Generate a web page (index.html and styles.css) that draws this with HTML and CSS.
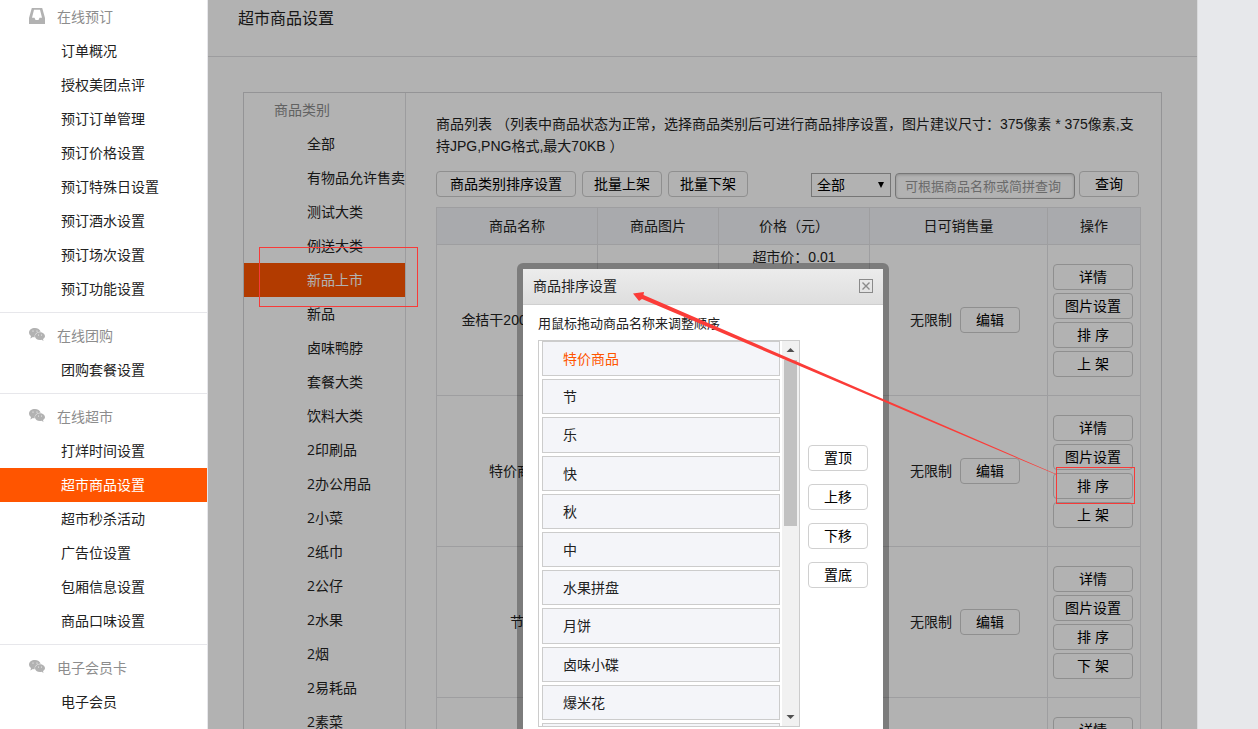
FILE: index.html
```html
<!DOCTYPE html>
<html lang="zh-CN">
<head>
<meta charset="utf-8">
<title>超市商品设置</title>
<link rel="stylesheet" href="styles.css">
</head>
<body>
<svg class="defs" aria-hidden="true">
  <symbol id="wechat" viewBox="0 0 16 16">
    <path fill="#b2b2b2" fill-rule="evenodd" d="M6 1C2.500 1 0 3 0 5.600c0 1.500.8 2.700 2 3.500L1.400 11.500l2.500-1.400c.6.2 1.200.2 1.800.2C5.300 7 8 4.600 11.700 4.700 11 2.500 8.700 1 6 1zM4 3.400a.6.6 0 1 1 0 1.200.6.6 0 0 1 0-1.200zm4 0a.6.6 0 1 1 0 1.200.6.6 0 0 1 0-1.200z"/>
    <path fill="#b2b2b2" fill-rule="evenodd" d="M11 5.200c-2.800 0-5 1.800-5 4S8.200 13 11 13c.6 0 1.100-.1 1.600-.2l1.900 1.100-.5-1.800c1.200-.7 2-1.800 2-2.900 0-2.200-2.200-4-5-4zM9.400 7.500a.5.500 0 1 1 0 1 .5.500 0 0 1 0-1zm3.200 0a.5.500 0 1 1 0 1 .5.500 0 0 1 0-1z"/>
  </symbol>
</svg>
<div class="page">
  <nav class="sidebar">
    <section class="group">
      <h2 class="group-title"><svg class="icon" viewBox="0 0 16 16"><path fill="#b2b2b2" fill-rule="evenodd" d="M2.800 0h10.400L16 10v6H0v-6zM5 1.800 3 9.800h2.500l1 2.200h3l1-2.200H13L11 1.800z"/></svg>在线预订</h2>
      <a class="item" href="#">订单概况</a>
      <a class="item" href="#">授权美团点评</a>
      <a class="item" href="#">预订订单管理</a>
      <a class="item" href="#">预订价格设置</a>
      <a class="item" href="#">预订特殊日设置</a>
      <a class="item" href="#">预订酒水设置</a>
      <a class="item" href="#">预订场次设置</a>
      <a class="item" href="#">预订功能设置</a>
    </section>
    <section class="group">
      <h2 class="group-title"><svg class="icon"><use href="#wechat"/></svg>在线团购</h2>
      <a class="item" href="#">团购套餐设置</a>
    </section>
    <section class="group">
      <h2 class="group-title"><svg class="icon"><use href="#wechat"/></svg>在线超市</h2>
      <a class="item" href="#">打烊时间设置</a>
      <a class="item active" href="#">超市商品设置</a>
      <a class="item" href="#">超市秒杀活动</a>
      <a class="item" href="#">广告位设置</a>
      <a class="item" href="#">包厢信息设置</a>
      <a class="item" href="#">商品口味设置</a>
    </section>
    <section class="group">
      <h2 class="group-title"><svg class="icon"><use href="#wechat"/></svg>电子会员卡</h2>
      <a class="item" href="#">电子会员</a>
    </section>
  </nav>

  <main class="main">
    <h1 class="title">超市商品设置</h1>
    <div class="panel">
      <div class="categories">
        <h2 class="cat-title">商品类别</h2>
        <a class="cat" href="#">全部</a>
        <a class="cat" href="#">有物品允许售卖</a>
        <a class="cat" href="#">测试大类</a>
        <a class="cat" href="#">例送大类</a>
        <a class="cat active" href="#">新品上市</a>
        <a class="cat" href="#">新品</a>
        <a class="cat" href="#">卤味鸭脖</a>
        <a class="cat" href="#">套餐大类</a>
        <a class="cat" href="#">饮料大类</a>
        <a class="cat" href="#">2印刷品</a>
        <a class="cat" href="#">2办公用品</a>
        <a class="cat" href="#">2小菜</a>
        <a class="cat" href="#">2纸巾</a>
        <a class="cat" href="#">2公仔</a>
        <a class="cat" href="#">2水果</a>
        <a class="cat" href="#">2烟</a>
        <a class="cat" href="#">2易耗品</a>
        <a class="cat" href="#">2素菜</a>
      </div>
      <div class="content">
        <p class="hint">商品列表 （列表中商品状态为正常，选择商品类别后可进行商品排序设置，图片建议尺寸：375像素 * 375像素,支持JPG,PNG格式,最大70KB ）</p>
        <div class="toolbar">
          <div class="bulk">
            <button class="btn wide">商品类别排序设置</button>
            <button class="btn mid">批量上架</button>
            <button class="btn mid">批量下架</button>
          </div>
          <form class="search">
            <span class="select-wrap"><select class="select" aria-label="商品状态"><option>全部</option></select></span>
            <input class="query" type="text" aria-label="查询" placeholder="可根据商品名称或简拼查询">
            <button class="btn" type="button">查询</button>
          </form>
        </div>
        <table class="goods">
          <colgroup><col class="c-name"><col class="c-pic"><col class="c-price"><col class="c-stock"><col class="c-op"></colgroup>
          <thead>
            <tr><th>商品名称</th><th>商品图片</th><th>价格（元）</th><th>日可销售量</th><th>操作</th></tr>
          </thead>
          <tbody>
            <tr>
              <td>金桔干200克/袋装</td><td></td><td class="price">超市价：0.01</td>
              <td><div class="stock">无限制<button class="btn">编辑</button></div></td>
              <td><div class="ops"><button class="btn mid">详情</button><button class="btn mid">图片设置</button><button class="btn mid">排 序</button><button class="btn mid">上 架</button></div></td>
            </tr>
            <tr>
              <td>特价商品</td><td></td><td></td>
              <td><div class="stock">无限制<button class="btn">编辑</button></div></td>
              <td><div class="ops"><button class="btn mid">详情</button><button class="btn mid">图片设置</button><button class="btn mid">排 序</button><button class="btn mid">上 架</button></div></td>
            </tr>
            <tr>
              <td>节</td><td></td><td></td>
              <td><div class="stock">无限制<button class="btn">编辑</button></div></td>
              <td><div class="ops"><button class="btn mid">详情</button><button class="btn mid">图片设置</button><button class="btn mid">排 序</button><button class="btn mid">下 架</button></div></td>
            </tr>
            <tr>
              <td></td><td></td><td></td><td></td>
              <td><div class="ops"><button class="btn mid">详情</button></div></td>
            </tr>
          </tbody>
        </table>
      </div>
    </div>
    <div class="mask"></div>
  </main>

  <div class="dialog" role="dialog" aria-labelledby="dialog-title">
    <header class="dialog-head">
      <h2 class="dialog-title" id="dialog-title">商品排序设置</h2>
      <button class="close" aria-label="关闭"><svg class="close-icon" viewBox="0 0 14 14"><rect x=".5" y=".5" width="13" height="13" fill="none" stroke="#8a8a8a"/><path d="M3.500 3.500l7 7M10.500 3.500l-7 7" fill="none" stroke="#8a8a8a" stroke-width="1.400"/></svg></button>
    </header>
    <div class="dialog-body">
      <p class="tip">用鼠标拖动商品名称来调整顺序</p>
      <div class="sorter">
        <div class="list-box">
          <ul class="list">
            <li class="row selected">特价商品</li>
            <li class="row">节</li>
            <li class="row">乐</li>
            <li class="row">快</li>
            <li class="row">秋</li>
            <li class="row">中</li>
            <li class="row">水果拼盘</li>
            <li class="row">月饼</li>
            <li class="row">卤味小碟</li>
            <li class="row">爆米花</li>
            <li class="row"></li>
          </ul>
          <div class="scrollbar">
            <svg class="arrow" viewBox="0 0 17 17"><path fill="#505050" d="M4.500 11h8l-4-4z"/></svg>
            <div class="track"><div class="thumb"></div></div>
            <svg class="arrow" viewBox="0 0 17 17"><path fill="#505050" d="M4.500 6h8l-4 4z"/></svg>
          </div>
        </div>
        <div class="moves">
          <button class="btn">置顶</button>
          <button class="btn">上移</button>
          <button class="btn">下移</button>
          <button class="btn">置底</button>
        </div>
      </div>
    </div>
  </div>

  <svg class="marks" width="1258" height="729" aria-hidden="true">
    <rect x="259.500" y="247.500" width="158" height="59" fill="none" stroke="#f83a38"/>
    <rect x="1056.500" y="467.500" width="78" height="36" fill="none" stroke="#f83a38"/>
    <path fill="#fb3c38" d="M633 293.500 644 292 643.500 295 1056 474 1056 474.600 642 299 639 301z"/>
  </svg>
</div>
</body>
</html>
```

FILE: styles.css
```css
* { box-sizing: border-box; }

body {
  margin: 0;
  background: #e7e8eb;
  color: #222;
  font: 14px/22px "Liberation Sans", "Noto Sans CJK SC", sans-serif;
}

h1, h2, p, ul { margin: 0; padding: 0; font-weight: normal; }
ul { list-style: none; }
a { color: inherit; text-decoration: none; }
button, input, select { font: inherit; color: #000; margin: 0; }

.defs { display: none; }

.page {
  position: relative;
  display: flex;
  height: 100vh;
  padding-right: 60px;
  overflow: hidden;
}

/* sidebar */
.sidebar {
  flex: none;
  width: 208px;
  background: #fff;
  border-right: 1px solid #e7e7eb;
}
.group { padding-bottom: 6px; }
.group + .group { padding-top: 6px; border-top: 1px solid #e7e7eb; }
.group-title {
  display: flex;
  align-items: center;
  gap: 12px;
  padding-left: 29px;
  color: #8d8d8d;
  font-size: 14px;
  line-height: 34px;
}
.icon { flex: none; width: 16px; height: 16px; margin-bottom: 2px; }
.item { display: block; padding-left: 61px; line-height: 34px; }
.item.active, .cat.active { background: #f50; color: #fff; }

/* main area */
.main {
  position: relative;
  flex: 1;
  min-width: 0;
  background: #fff;
  border-right: 1px solid #d9dadc;
  overflow: hidden;
}
.mask { position: absolute; inset: 0; background: rgba(0, 0, 0, .3); }
.title {
  height: 57px;
  padding: 8px 30px;
  border-bottom: 1px solid #e0e0e2;
  font-size: 16px;
}
.panel {
  display: flex;
  min-height: 100vh;
  margin: 35px 35px 0;
  border: 1px solid #d4d5d7;
}
.categories {
  flex: none;
  width: 162px;
  border-right: 1px solid #e0e0e2;
  overflow: hidden;
  font-family: "Open Sans", "Noto Sans CJK SC", sans-serif;
}
.cat-title { padding-left: 30px; color: #8d8d8d; font-size: 14px; line-height: 34px; }
.cat { display: block; padding-left: 63px; line-height: 34px; white-space: nowrap; }

.content { flex: 1; min-width: 0; padding: 20px 20px 0 30px; }
.toolbar {
  display: flex;
  justify-content: space-between;
  padding: 14px 2px 8px 0;
}
.bulk { display: flex; gap: 6px; }
.search { display: flex; gap: 4px; height: 28px; }
.btn {
  width: 60px;
  height: 26px;
  padding: 0;
  background: transparent;
  border: 1px solid #d0d0d0;
  border-radius: 4px;
  line-height: 22px;
}
.main .btn { border-color: #cdcdcd; }
.btn.wide { width: 140px; }
.btn.mid { width: 80px; }
.select-wrap { position: relative; height: 24px; margin-top: 2px; }
.select-wrap::after {
  content: "";
  position: absolute;
  top: 9px;
  right: 7px;
  border: 3px solid transparent;
  border-top: 6px solid #000;
  border-bottom: 0;
}
.select {
  width: 80px;
  height: 24px;
  padding: 0 5px;
  background: #fff;
  border: 1px solid #a9a9a9;
  border-radius: 0;
  appearance: none;
}
.query {
  width: 180px;
  height: 26px;
  margin-top: 2px;
  padding: 0 9px;
  background: #fff;
  border: 1px solid #a9a9a9;
  border-radius: 4px;
  box-shadow: inset 0 1px 3px rgba(0, 0, 0, .2);
  font-size: 13px;
}
.query::placeholder { color: #999; opacity: 1; }

.goods { width: 100%; border-collapse: collapse; table-layout: fixed; }
.goods th, .goods td {
  padding: 0;
  border: 1px solid #e3e3e5;
  text-align: center;
  font-weight: normal;
}
.goods th { height: 37px; background: #f2f4f8; }
.goods td { height: 151px; }
.goods td.price { padding-top: 1px; vertical-align: top; }
.c-name { width: 161px; }
.c-pic { width: 121px; }
.c-price { width: 151px; }
.c-stock { width: 178px; }
.goods tr:last-child td { vertical-align: top; }
.goods tr:last-child .ops { padding-top: 19px; }
.stock {
  display: flex;
  align-items: center;
  justify-content: center;
  gap: 8px;
  padding-left: 13px;
}
.ops { display: flex; flex-direction: column; gap: 3px; padding-left: 5px; }

/* dialog */
.dialog {
  position: absolute;
  top: 263px;
  left: 517px;
  width: 372px;
  border: 6px solid rgba(0, 0, 0, .3);
  border-radius: 6px;
  background: #fff;
  background-clip: padding-box;
}
.dialog-head {
  display: flex;
  align-items: center;
  justify-content: space-between;
  height: 36px;
  padding: 0 10px 2px;
  background: linear-gradient(#ececec, #dedede);
  border-bottom: 1px solid #cfcfcf;
}
.dialog-title { font-size: 14px; }
.close { width: 14px; height: 14px; padding: 0; border: 0; background: none; }
.close-icon { display: block; width: 14px; height: 14px; }
.dialog-body { padding: 8px 15px 15px; }
.tip { padding-bottom: 5px; font-size: 13px; }
.sorter { display: flex; align-items: center; gap: 8px; }
.list-box {
  display: flex;
  width: 262px;
  height: 387px;
  border: 1px solid #ccc;
  overflow: hidden;
}
.list { flex: 1; padding: 0 2px 0 3px; }
.row {
  height: 35px;
  margin-bottom: 3px;
  padding-left: 20px;
  background: #f4f5f9;
  border: 1px solid #ccc;
  line-height: 34px;
}
.row:nth-child(5n + 3) { height: 36px; }
.row.selected { color: #f50; }
.scrollbar {
  display: flex;
  flex-direction: column;
  width: 17px;
  background: #f1f1f1;
}
.arrow { flex: none; width: 17px; height: 17px; }
.track { flex: 1; padding: 2px; }
.thumb { height: 166px; background: #c1c1c1; }
.moves { display: flex; flex-direction: column; gap: 13px; padding-bottom: 34px; }

.marks { position: absolute; top: 0; left: 0; pointer-events: none; }
```
